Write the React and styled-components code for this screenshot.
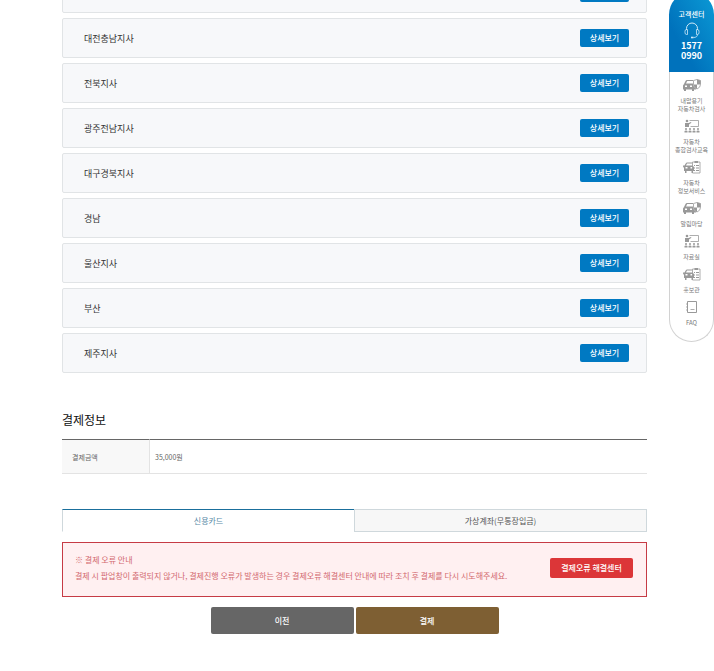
import React, { useState } from "react";
import styled, { createGlobalStyle } from "styled-components";

const GlobalStyle = createGlobalStyle`
  * {
    box-sizing: border-box;
  }

  body {
    margin: 0;
    background: #fff;
    color: #333;
    font-family: "Noto Sans CJK KR", "Noto Sans", sans-serif;
    font-size: 9px;
  }

  button {
    border: 0;
    padding: 0;
    font-family: inherit;
    cursor: pointer;
  }

  a {
    color: inherit;
    text-decoration: none;
  }
`;

const Page = styled.div`
  display: flex;
  align-items: flex-start;
  gap: 22px;
  padding-left: 62px;
  overflow: hidden;
`;

const Main = styled.main`
  flex: 1;
  min-width: 0;
  padding-bottom: 36px;
`;

const BranchList = styled.ul`
  display: flex;
  flex-direction: column;
  gap: 5px;
  margin: -27px 0 0;
  padding: 0;
  list-style: none;
`;

const BranchRow = styled.li`
  display: flex;
  align-items: center;
  justify-content: space-between;
  height: 40px;
  padding: 0 17px 0 21px;
  border: 1px solid #e1e4e6;
  border-radius: 2px;
  background: #f7f8fa;
`;

const DetailButton = styled.button`
  width: 49px;
  height: 18px;
  border-radius: 2px;
  background: #0079c2;
  color: #fff;
  font-size: 8px;
  font-weight: 500;
  line-height: 18px;
`;

const SectionTitle = styled.h2`
  margin: 37px 0 10px;
  color: #111;
  font-size: 12px;
  font-weight: 400;
  line-height: 19px;
`;

const PayTable = styled.table`
  width: 100%;
  border-collapse: separate;
  border-spacing: 0;
  font-size: 7px;
  color: #666;

  th,
  td {
    height: 35px;
    padding: 0 5px;
    border-top: 1px solid #666;
    border-bottom: 1px solid #e3e3e3;
    text-align: left;
    font-weight: 400;
  }

  th {
    width: 88px;
    padding-left: 10px;
    border-right: 1px solid #e3e3e3;
    background: #f8f8f8;
  }
`;

const Tabs = styled.div`
  display: flex;
  margin-top: 35px;
`;

const Tab = styled.button`
  flex: 1;
  height: 23px;
  border: 1px solid #cfd8dc;
  border-top-color: ${(props) => (props.$active ? "#1a6f9c" : "#cfd8dc")};
  border-bottom-color: ${(props) => (props.$active ? "#fff" : "#cfd8dc")};
  border-right-width: ${(props) => (props.$active ? "0" : "1px")};
  background: ${(props) => (props.$active ? "#fff" : "#f7f7f7")};
  color: ${(props) => (props.$active ? "#5b8ba8" : "#555")};
  font-size: 8px;
  line-height: 20px;
`;

const Notice = styled.section`
  display: flex;
  align-items: center;
  justify-content: space-between;
  height: 55px;
  margin-top: 10px;
  padding: 0 13px 3px 12px;
  border: 1px solid #c63b45;
  background: #fff0f1;
`;

const NoticeText = styled.p`
  margin: 0;
  color: #d2686f;
  font-size: 8px;
  line-height: 16px;
  white-space: nowrap;
`;

const NoticeButton = styled.button`
  width: 83px;
  height: 20px;
  border-radius: 2px;
  background: #dc3638;
  color: #fff;
  font-size: 8px;
  font-weight: 500;
  line-height: 20px;
`;

const Actions = styled.div`
  display: flex;
  justify-content: center;
  gap: 2px;
  margin-top: 10px;
`;

const ActionButton = styled.button`
  width: 143px;
  height: 27px;
  border-radius: 2px;
  background: ${(props) => (props.$primary ? "#7e5f33" : "#666")};
  color: #fff;
  font-size: 8px;
  font-weight: 500;
`;

const QuickMenu = styled.aside`
  flex: none;
  width: 45px;
  margin-top: -8px;
`;

const CallCenter = styled.div`
  display: flex;
  flex-direction: column;
  align-items: center;
  height: 80px;
  padding-top: 17px;
  border-radius: 23px 23px 0 0;
  background: linear-gradient(60deg, #0072bc 30%, #0b9bd6);
  color: #fff;
  font-size: 7px;
  font-weight: 500;
  line-height: 10px;

  svg {
    margin: 3px 0 2px;
  }

  strong {
    font-size: 9px;
    font-weight: 700;
    line-height: 10px;
    text-align: center;
  }
`;

const QuickLinks = styled.nav`
  display: flex;
  flex-direction: column;
  gap: 6px;
  padding: 6px 0 14px;
  border: 1px solid #d2d2d2;
  border-top: 0;
  border-radius: 0 0 23px 23px;
`;

const QuickLink = styled.a`
  display: flex;
  flex-direction: column;
  align-items: center;
  gap: 5px;
  color: #777;
  font-size: 6px;
  line-height: 8px;
  text-align: center;
  white-space: pre;
`;

const HeadsetIcon = () => (
  <svg width="16" height="17" viewBox="0 0 16 17" fill="none" stroke="#cfe9f7">
    <path d="M2.5 8V6.5a5.5 5.5 0 0 1 11 0V8" />
    <path
      d="M3.5 7.5v5h-.8A1.7 1.7 0 0 1 1 10.8V9.2a1.7 1.7 0 0 1 1.7-1.7zM12.5 7.5v5h.8a1.7 1.7 0 0 0 1.7-1.7V9.2a1.7 1.7 0 0 0-1.7-1.7z"
      strokeWidth=".8"
    />
    <path d="M13.5 12.5c0 2-1.5 3-4 3" strokeWidth=".8" />
    <path d="M7 15.5h2.5" strokeWidth="1.6" />
  </svg>
);

const CarShieldIcon = () => (
  <svg width="18" height="14" viewBox="0 0 18 14" fill="#999">
    <path
      fillRule="evenodd"
      d="M1 6l1.5-3Q3 2 4 2h6v1H4.2L3 5.5h7L11 9h2v2.5h-2V13H9v-1.5H3V13H1v-1.5H0v-4zM2 7.5V9h2V7.5zM7 7.5V9h2V7.5z"
    />
    <path
      d="M14 1.5l3.5 1v4q0 3-3.500 4.500-3.500-1.500-3.500-4.500v-4z"
      fill="#fff"
      stroke="#999"
      strokeWidth=".8"
    />
    <path d="M14 1.500l3.500 1v4H14zM14 6.500V11q-3-1.500-3.500-4.500z" />
  </svg>
);

const LectureIcon = () => (
  <svg width="16" height="14" viewBox="0 0 16 14" fill="#999">
    <path d="M5.5 1.5h9v6h-8" fill="none" stroke="#999" strokeWidth=".8" />
    <circle cx="3" cy="2" r="1.3" />
    <path d="M1 4h3.5L7 3l.4.8L5 5.500V8H1z" />
    {[2, 6, 10, 14].map((x) => (
      <g key={x}>
        <circle cx={x} cy="10" r="1" />
        <path d={`M${x - 1.5} 13.5v-1q0-1 1.5-1t1.5 1v1z`} />
      </g>
    ))}
  </svg>
);

const CarChecklistIcon = () => (
  <svg width="18" height="14" viewBox="0 0 18 14" fill="#999">
    <path d="M9.5 2H17v11H9.5z" fill="#fff" stroke="#999" strokeWidth=".8" />
    <path d="M11.5 1H15v2h-3.5zM11 5h1v1h-1zM13 5h3v1h-3zM11 7.5h1v1h-1zM13 7.5h3v1h-3zM11 10h1v1h-1zM13 10h3v1h-3z" />
    <path
      fillRule="evenodd"
      d="M1.5 5.5L3 3q.3-.5 1-.5h5v1H4L3 5.5h6.5L11 7v4h-1v2H8.500v-2h-5v2H2v-2H1V8L0 6.500v-1zM2.500 7v1.500h2V7zM7.500 7v1.500h2V7z"
    />
  </svg>
);

const FaqIcon = () => (
  <svg width="12" height="14" viewBox="0 0 12 14" fill="none" stroke="#999">
    <path d="M1.5 1.500h9v11h-9z" />
    <path d="M0 4h2M0 7h2M0 10h2M4.500 9.500h4" strokeWidth=".8" />
  </svg>
);

const branches = [
  "",
  "대전충남지사",
  "전북지사",
  "광주전남지사",
  "대구경북지사",
  "경남",
  "울산지사",
  "부산",
  "제주지사",
];

const quickLinks = [
  { label: "내압용기\n자동차검사", Icon: CarShieldIcon },
  { label: "자동차\n종합검사교육", Icon: LectureIcon },
  { label: "자동차\n정보서비스", Icon: CarChecklistIcon },
  { label: "알림마당", Icon: CarShieldIcon },
  { label: "자료실", Icon: LectureIcon },
  { label: "홍보관", Icon: CarChecklistIcon },
  { label: "FAQ", Icon: FaqIcon },
];

const payMethods = ["신용카드", "가상계좌(무통장입금)"];

const App = () => {
  const [method, setMethod] = useState(payMethods[0]);

  return (
    <Page>
      <GlobalStyle />
      <Main>
        <BranchList>
          {branches.map((name) => (
            <BranchRow key={name}>
              <span>{name}</span>
              <DetailButton type="button">상세보기</DetailButton>
            </BranchRow>
          ))}
        </BranchList>

        <SectionTitle>결제정보</SectionTitle>
        <PayTable>
          <tbody>
            <tr>
              <th scope="row">결제금액</th>
              <td>35,000원</td>
            </tr>
          </tbody>
        </PayTable>

        <Tabs role="tablist">
          {payMethods.map((name) => (
            <Tab
              key={name}
              type="button"
              role="tab"
              aria-selected={method === name}
              $active={method === name}
              onClick={() => setMethod(name)}
            >
              {name}
            </Tab>
          ))}
        </Tabs>

        <Notice>
          <NoticeText>
            ※ 결제 오류 안내
            <br />
            결제 시 팝업창이 출력되지 않거나, 결제진행 오류가 발생하는 경우
            결제오류 해결센터 안내에 따라 조치 후 결제를 다시 시도해주세요.
          </NoticeText>
          <NoticeButton type="button">결제오류 해결센터</NoticeButton>
        </Notice>

        <Actions>
          <ActionButton type="button">이전</ActionButton>
          <ActionButton type="button" $primary>
            결제
          </ActionButton>
        </Actions>
      </Main>

      <QuickMenu>
        <CallCenter>
          고객센터
          <HeadsetIcon />
          <strong>
            1577
            <br />
            0990
          </strong>
        </CallCenter>
        <QuickLinks>
          {quickLinks.map(({ label, Icon }) => (
            <QuickLink key={label} href="#">
              <Icon />
              {label}
            </QuickLink>
          ))}
        </QuickLinks>
      </QuickMenu>
    </Page>
  );
};

export default App;
